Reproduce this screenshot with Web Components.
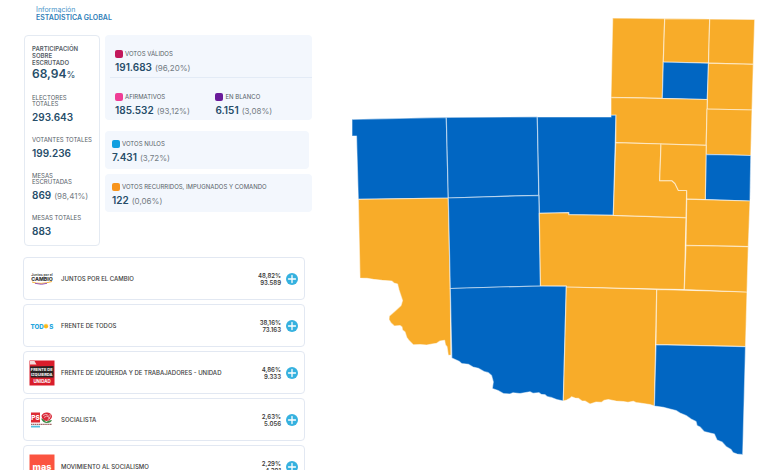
<!DOCTYPE html>
<html lang="es">
<head>
<meta charset="utf-8">
<meta name="viewport" content="width=device-width, initial-scale=1">
<title>Estadística global</title>
<style>
body { margin: 0; background: #fff; font-family: Inter, "Liberation Sans", sans-serif; color: #565e67; }
</style>
</head>
<body>
<results-page></results-page>

<template id="t-main">
  <style>
    :host { display: block; }
    header { padding: 6px 0 13px 12px; font-size: 7px; line-height: 8px; color: #4a93c8; }
    h1 { margin: 0; font-size: 7px; line-height: 8px; font-weight: 600; color: #2f80b8; }
    .stats { display: grid; grid-template-columns: 76px 1fr; gap: 5px; align-items: start; }
    .summary { display: flex; flex-direction: column; gap: 12px; padding: 7px 0 6px 7px; border: 1px solid #e4eaf2; border-radius: 4px; }
    .panels { display: flex; flex-direction: column; gap: 5px; }
    .valid { margin-bottom: 6px; }
    .nulls { margin-right: 3px; }
    .split { display: grid; grid-template-columns: 100fr 106fr; }
    hr { margin: 0 0 0 5px; border: 0; border-top: 1px solid #e3ebf6; }
    .list { display: flex; flex-direction: column; gap: 4px; margin: 11px 7px 0 -1px; }
  </style>
  <header>Información<h1>ESTADÍSTICA GLOBAL</h1></header>
  <div class="stats">
    <section class="summary">
      <stat-figure lead value="68,94" unit="%">PARTICIPACIÓN<br>SOBRE<br>ESCRUTADO</stat-figure>
      <stat-figure value="293.643">ELECTORES<br>TOTALES</stat-figure>
      <stat-figure value="199.236">VOTANTES TOTALES</stat-figure>
      <stat-figure value="869" note="(98,41%)">MESAS<br>ESCRUTADAS</stat-figure>
      <stat-figure value="883">MESAS TOTALES</stat-figure>
    </section>
    <div class="panels">
      <tint-panel class="valid">
        <vote-count color="#c2185b" value="191.683" note="(96,20%)" inset>VOTOS VÁLIDOS</vote-count>
        <hr>
        <div class="split">
          <vote-count color="#ef3e96" value="185.532" note="(93,12%)" inset>AFIRMATIVOS</vote-count>
          <vote-count color="#6a1b9a" value="6.151" note="(3,08%)" inset>EN BLANCO</vote-count>
        </div>
      </tint-panel>
      <tint-panel class="nulls"><vote-count color="#119fe0" value="7.431" note="(3,72%)">VOTOS NULOS</vote-count></tint-panel>
      <tint-panel><vote-count color="#f7941d" value="122" note="(0,06%)">VOTOS RECURRIDOS, IMPUGNADOS Y COMANDO</vote-count></tint-panel>
    </div>
  </div>
  <div class="list">
    <party-row name="JUNTOS POR EL CAMBIO" share="48,82%" votes="93.589">
      <svg viewBox="0 0 26 26" aria-hidden="true"><text x="13" y="9.700" font-size="3.400" font-weight="700" text-anchor="middle" fill="#555">Juntos por el</text><text x="13" y="15" font-size="5.200" font-weight="800" text-anchor="middle" fill="#333">CAMBIO</text><path d="M3 16q8 3 20-.5" stroke="#f6b23c" fill="none"/><path d="M6 17.300q7 2 12 0" stroke="#9b59b6" fill="none"/></svg>
    </party-row>
    <party-row name="FRENTE DE TODOS" share="38,16%" votes="73.163">
      <svg viewBox="0 0 26 26" aria-hidden="true"><text x="1.500" y="15.500" font-size="6.200" font-weight="800" fill="#23a5de">TOD</text><circle cx="17" cy="13.200" r="2" fill="#fbb81c"/><path d="M17 10.700v5M14.500 13.200h5M15.200 11.400l3.600 3.600M18.800 11.400l-3.600 3.600" stroke="#fbb81c" stroke-width=".6"/><text x="20.300" y="15.500" font-size="6.200" font-weight="800" fill="#23a5de">S</text></svg>
    </party-row>
    <party-row name="FRENTE DE IZQUIERDA Y DE TRABAJADORES - UNIDAD" share="4,86%" votes="9.333">
      <svg viewBox="0 0 26 26" aria-hidden="true"><path d="M.5.500h25v25H.5z" fill="#d91d2b"/><path d="M1 1h4.500l2 3.500H1z" fill="#f3d9da"/><path d="M1 6.500l23.500-.5v11.500H2z" fill="#292323"/><text x="12.700" y="11.300" font-size="4" font-weight="700" text-anchor="middle" fill="#fff">FRENTE DE</text><text x="12.700" y="16" font-size="4" font-weight="700" text-anchor="middle" fill="#fff">IZQUIERDA</text><text x="13" y="22.500" font-size="4.400" font-weight="700" text-anchor="middle" fill="#fff">UNIDAD</text></svg>
    </party-row>
    <party-row name="SOCIALISTA" share="2,63%" votes="5.056">
      <svg viewBox="0 0 26 26" aria-hidden="true"><path d="M2 5.500h9v10H2z" fill="#dc2b34"/><text x="6.500" y="13" font-size="6.500" font-weight="800" text-anchor="middle" fill="#fff">PS</text><path d="M12 11.500q3 0 5 3.500 3-2 6-2-1 3-5 3-4 0-6-4.500z" fill="#3e8b45"/><path d="M17 14q-4.500-1.500-4.500-5.500 2-3.500 6-3 4.500.500 4.500 4.500-1.500 4-6 4z" fill="#d92938"/><path d="M14 8.500q3-2.500 5.500 0M15 10.500q2.500-2.500 5-.5 1 1.500-1.500 3M21 7q1 3-1 5" stroke="#fff" stroke-width=".6" fill="none"/><path d="M2 17.300h21" stroke="#8a4545" stroke-width="1" stroke-dasharray="1.500 .4"/><path d="M2 19.600h9" stroke="#55c2df" stroke-width="1.800"/></svg>
    </party-row>
    <party-row name="MOVIMIENTO AL SOCIALISMO" share="2,29%" votes="4.391">
      <svg viewBox="0 0 26 26" aria-hidden="true"><path d="M.5.500h25v25H.5z" fill="#fb5440"/><text x="13" y="16" font-size="9" font-weight="800" text-anchor="middle" fill="#fff">mas</text></svg>
    </party-row>
  </div>
</template>

<script>
const define = (name, render) => customElements.define(name, class extends HTMLElement {
  connectedCallback() {
    if (this.shadowRoot) return;
    this.attachShadow({ mode: 'open' }).innerHTML = render(this);
  }
});
const attr = (el, name) => el.getAttribute(name) || '';

const figureStyles = `
  strong { font-size: 10px; line-height: 13px; font-weight: 600; color: #264d69; }
  .note { font-size: 8px; margin-left: 3px; color: #747c84; }
  p { margin: 0; line-height: 13px; white-space: nowrap; }`;

define('stat-figure', el => `
  <style>${figureStyles}
    :host { display: block; }
    .label { font-size: 6px; line-height: 6px; padding-bottom: 2px; }
    :host([lead]) .label { font-weight: 600; line-height: 7px; padding: 2px 0 0; }
    :host([lead]) { padding-bottom: 1px; }
    :host([lead]) strong { font-size: 12px; }
    .unit { font-size: 9px; color: #264d69; }
  </style>
  <div class="label"><slot></slot></div>
  <p><strong>${attr(el, 'value')}</strong><span class="unit">${attr(el, 'unit')}</span><span class="note">${attr(el, 'note')}</span></p>`);

define('vote-count', el => `
  <style>${figureStyles}
    :host { display: block; padding: 8px 0 4px 7px; }
    :host([inset]) { padding: 14px 0 2px 10px; }
    .label { display: flex; align-items: center; gap: 2px; font-size: 6px; line-height: 10px; white-space: nowrap; }
    i { width: 8px; height: 8px; border-radius: 2px; background: ${attr(el, 'color')}; }
  </style>
  <div class="label"><i></i><slot></slot></div>
  <p><strong>${attr(el, 'value')}</strong><span class="note">${attr(el, 'note')}</span></p>`);

define('tint-panel', () => `
  <style>:host { display: block; background: #f3f7fd; border-radius: 4px; }</style>
  <slot></slot>`);

define('party-row', el => `
  <style>
    :host { display: flex; align-items: center; box-sizing: border-box; min-height: 43px; padding: 0 6px 0 5px; border: 1px solid #e2e8f2; border-radius: 4px; color: #3c3c3c; font-size: 6px; line-height: 7px; font-weight: 500; }
    ::slotted(svg) { width: 26px; height: 26px; flex: none; }
    .name { flex: 1; padding-left: 6px; }
    .votes { text-align: right; font-weight: 600; }
    button { display: block; width: 12px; height: 12px; margin-left: 5px; padding: 0; border: 0; background: none; cursor: pointer; }
    button svg { display: block; width: 100%; }
  </style>
  <slot></slot>
  <span class="name">${attr(el, 'name')}</span>
  <span class="votes">${attr(el, 'share')}<br>${attr(el, 'votes')}</span>
  <button type="button" aria-label="Ver detalle de ${attr(el, 'name')}"><svg viewBox="0 0 12 12"><circle cx="6" cy="6" r="6" fill="#35b1df"/><path d="M6 2.500v7M2.500 6h7" stroke="#fff" stroke-width="1.300" stroke-linecap="round"/></svg></button>`);

customElements.define('statistics-panel', class extends HTMLElement {
  connectedCallback() {
    if (this.shadowRoot) return;
    this.attachShadow({ mode: 'open' }).append(document.getElementById('t-main').content.cloneNode(true));
  }
});

// Department outlines; "b" and "o" select the fill of the leading list.
const departments = [
  ['b', '352,119.300 446.300,117.300 448.300,198 358.300,199.300 356.500,136 352,136'],
  ['b', '446.300,117.300 537.300,116.700 538.800,195.300 448.300,198'],
  ['b', '537.300,117 611,117 611,115 616,115 613.300,215.300 568.700,214.700 568.700,212.700 539.300,213.300'],
  ['o', '358.300,199.300 448.300,198 450.300,288.500 450.900,355 448.300,355.300 447,346.700 445.500,345 444.600,340.300 440,341 436.700,343.300 432,344 426.700,345 420,344.500 413.300,344.800 409,340.500 406.700,337.300 405,332 402.500,330 402,327 400,325.600 394.300,326 391,323 389,319.500 389.300,316 395,311 401,305.500 402.500,300.500 401,296 399,290 397.500,284 394,283 391.700,281 382,280.300 373.300,279.300 367,278.300 360,278'],
  ['b', '448.300,198 538.800,195.300 540.500,286 500,287 450.300,288.500'],
  ['o', '539.300,213.300 568.700,212.700 568.700,214.700 613.300,215.300 686,217.700 684.300,289.500 566.500,287 566.300,286.200 540.500,286'],
  ['b', '450.300,288.500 500,287 540.500,286 566.300,286.200 563.300,401 556.700,399.600 552,397.700 547,396.500 545,394.700 541,394.300 539,392.700 533,393.300 530,391.800 520,393.500 513,392.800 510,394 503.300,393.500 498,390.500 492.300,388.500 493.300,382 491.500,375.500 488.300,372.700 484,371.500 478.300,368.300 473,367 468.300,364.300 461.700,363.600 459,361.300 451.800,358'],
  ['o', '566.300,287 656.700,289.500 654.400,406 650,404.600 640,403 636,402.500 633.300,401.300 628,402.300 623.300,401.500 616,401 608.300,399.500 604.300,400.300 601.700,402.300 596,402 590,404 585,401 582,401 578.300,398.300 575,398 571.700,396.700 570,398.300 566.700,400 563.300,401'],
  ['o', '656.700,289.500 747,292 745.500,346.700 656,344.700'],
  ['b', '656,344.700 745.500,346.700 742.700,454.700 737,454 733,452.500 731,449.500 726,446.500 722,442 717,440 714.300,434 710,433 704,431.500 700,427 697,425.500 696,421.500 691,419 686,415.500 680,413 676,410.500 670,409 663.300,407.300 654.400,406'],
  ['o', '612.700,18 664.700,18.600 663.300,62 662.300,98.300 611,97.300'],
  ['o', '664.700,18.600 709.700,19 708.500,63.200 663.300,62'],
  ['o', '709.700,19 754.700,19.500 753.300,64.300 708.500,63.200'],
  ['b', '663.300,62 708.500,63.200 707.300,99.500 662.300,98.300'],
  ['o', '708.500,63.200 753.300,64.300 752,110 707,109'],
  ['o', '611,97.300 707.300,99.500 706.200,145.300 615.700,142.700 616,115 611,115'],
  ['o', '707,109 752,110 750.800,155.500 706,154.300'],
  ['b', '706,154.300 750.800,155.500 750,201 705.300,199.500'],
  ['o', '615.700,142.700 661,144 659.700,180.700 672,180.700 675,183.500 678.300,190.300 686.700,190.500 686,217.700 613.300,215.300'],
  ['o', '661,144 706.200,145.300 705.300,199.500 686.700,199.200 686.700,190.500 678.300,190.300 675,183.500 672,180.700 659.700,180.700'],
  ['o', '686.700,199.200 750,201 748.300,246.700 686,245.300'],
  ['o', '686,245.300 748.300,246.700 747,292 684.300,289.500']
];

define('department-map', () => `
  <style>
    :host, svg { display: block; }
    svg { width: 100%; }
    polygon { stroke: #fff; stroke-opacity: .5; stroke-width: 1.200; stroke-linejoin: round; }
    .b { fill: #0166c2; }
    .o { fill: #f8ac29; }
  </style>
  <svg viewBox="344 0 416 460" role="img" aria-label="Mapa de resultados por departamento">
    ${departments.map(([fill, points]) => `<polygon class="${fill}" points="${points}"/>`).join('')}
  </svg>`);

define('results-page', () => `
  <style>
    :host { display: grid; grid-template-columns: 288fr 416fr; gap: 32px; align-items: start; padding: 0 20px 8px 24px; }
  </style>
  <statistics-panel></statistics-panel>
  <department-map></department-map>`);
</script>
</body>
</html>
